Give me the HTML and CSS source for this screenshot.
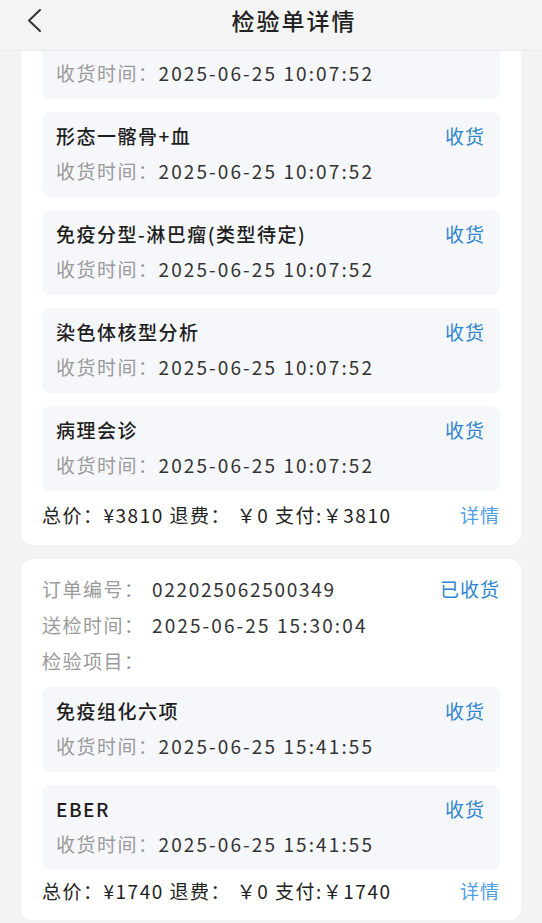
FILE: index.html
```html
<!DOCTYPE html>
<html lang="zh-CN">
<head>
	<meta charset="UTF-8">
	<title>检验单详情</title>
	<link rel="stylesheet" href="styles.css">
</head>
<body>
	<div class="header">
		<a class="back" href="#">
			<svg width="16" height="26" viewBox="0 0 16 26"><polyline points="13,2 2,12.5 13,23" fill="none" stroke="#333" stroke-width="2" stroke-linecap="round" stroke-linejoin="round"/></svg>
		</a>
		<div class="title">检验单详情</div>
	</div>

	<div class="main">
		<div class="card card-scrolled">
			<div class="items items-5">
				<div class="item">
					<div class="item-time item-time-first"><span class="lbl">收货时间：</span><span class="val">2025-06-25 10:07:52</span></div>
				</div>
				<div class="item">
					<div class="item-top"><span class="item-name">形态一髂骨+血</span><a class="link" href="#">收货</a></div>
					<div class="item-time"><span class="lbl">收货时间：</span><span class="val">2025-06-25 10:07:52</span></div>
				</div>
				<div class="item">
					<div class="item-top"><span class="item-name">免疫分型-淋巴瘤(类型待定)</span><a class="link" href="#">收货</a></div>
					<div class="item-time"><span class="lbl">收货时间：</span><span class="val">2025-06-25 10:07:52</span></div>
				</div>
				<div class="item">
					<div class="item-top"><span class="item-name">染色体核型分析</span><a class="link" href="#">收货</a></div>
					<div class="item-time"><span class="lbl">收货时间：</span><span class="val">2025-06-25 10:07:52</span></div>
				</div>
				<div class="item">
					<div class="item-top"><span class="item-name">病理会诊</span><a class="link" href="#">收货</a></div>
					<div class="item-time"><span class="lbl">收货时间：</span><span class="val">2025-06-25 10:07:52</span></div>
				</div>
			</div>
			<div class="foot">
				<span>总价：¥3810 退费： ￥0 支付:￥3810</span>
				<a class="link link-light" href="#">详情</a>
			</div>
		</div>

		<div class="card">
			<div class="row">
				<span class="row-lbl">订单编号：</span><span class="row-val row-val-no">022025062500349</span>
				<span class="status">已收货</span>
			</div>
			<div class="row">
				<span class="row-lbl">送检时间：</span><span class="row-val">2025-06-25 15:30:04</span>
			</div>
			<div class="row">
				<span class="row-lbl">检验项目：</span>
			</div>
			<div class="items items-2">
				<div class="item">
					<div class="item-top"><span class="item-name">免疫组化六项</span><a class="link" href="#">收货</a></div>
					<div class="item-time"><span class="lbl">收货时间：</span><span class="val">2025-06-25 15:41:55</span></div>
				</div>
				<div class="item">
					<div class="item-top"><span class="item-name">EBER</span><a class="link" href="#">收货</a></div>
					<div class="item-time"><span class="lbl">收货时间：</span><span class="val">2025-06-25 15:41:55</span></div>
				</div>
			</div>
			<div class="foot foot-2">
				<span>总价：¥1740 退费： ￥0 支付:￥1740</span>
				<a class="link link-light" href="#">详情</a>
			</div>
		</div>
	</div>
</body>
</html>
```

FILE: styles.css
```css
*{
	margin: 0;
	padding: 0;
	box-sizing: border-box;
}
body{
	width: 542px;
	height: 923px;
	overflow: hidden;
	background: #f3f3f3;
	font-family: "Noto Sans CJK SC", "Noto Sans", sans-serif;
	font-size: 19px;
	letter-spacing: 1.5px;
	color: #333;
}
a{
	text-decoration: none;
}
.header{
	height: 51px;
	background: #f4f4f4;
	border-bottom: 1px solid #e9e9e9;
	display: flex;
	align-items: flex-start;
	justify-content: center;
	padding-left: 46px;
	position: relative;
	z-index: 2;
}
.back{
	position: absolute;
	left: 27px;
	top: 8px;
}
.title{
	font-size: 23px;
	line-height: 40px;
	color: #222;
	font-weight: 500;
	letter-spacing: 2px;
}
.main{
	height: 872px;
	overflow: hidden;
	padding: 0 21px;
}
.card{
	background: #fff;
	border-radius: 12px;
	padding: 16px 21px 15px;
	margin-bottom: 14px;
}
.card-scrolled{
	margin-top: -37px;
	padding-top: 0;
	padding-bottom: 16px;
}
.items{
	overflow: hidden;
}
.items-5{
	height: 477px;
}
.items-2{
	height: 182px;
	margin-top: 12px;
}
.item{
	background: #f6f7fa;
	border-radius: 8px;
	height: 85px;
	padding: 10px 15px 0 14px;
	margin-bottom: 13px;
}
.item-top{
	display: flex;
	justify-content: space-between;
	line-height: 28px;
}
.item-name{
	color: #1e1e1e;
	font-weight: 500;
}
.link{
	color: #2f86cf;
	letter-spacing: 1px;
}
.link-light{
	color: #4f9ddf;
}
.item-time{
	line-height: 28px;
	margin-top: 7px;
	color: #333;
}
.item-time-first{
	margin-top: 35px;
}
.lbl{
	color: #9a9a9a;
}
.val{
	letter-spacing: 2.1px;
}
.foot{
	display: flex;
	justify-content: space-between;
	line-height: 28px;
	padding-top: 10px;
	color: #222;
}
.foot-2{
	padding-top: 8px;
}
.row{
	display: flex;
	line-height: 28px;
	margin-bottom: 8px;
}
.row:nth-child(3){
	margin-bottom: 0;
}
.row-lbl{
	color: #9a9a9a;
	width: 110px;
}
.row-val{
	flex: 1;
	color: #333;
	letter-spacing: 2.1px;
}
.row-val-no{
	letter-spacing: 1.7px;
}
.status{
	color: #2f86cf;
	letter-spacing: 1px;
}
```
